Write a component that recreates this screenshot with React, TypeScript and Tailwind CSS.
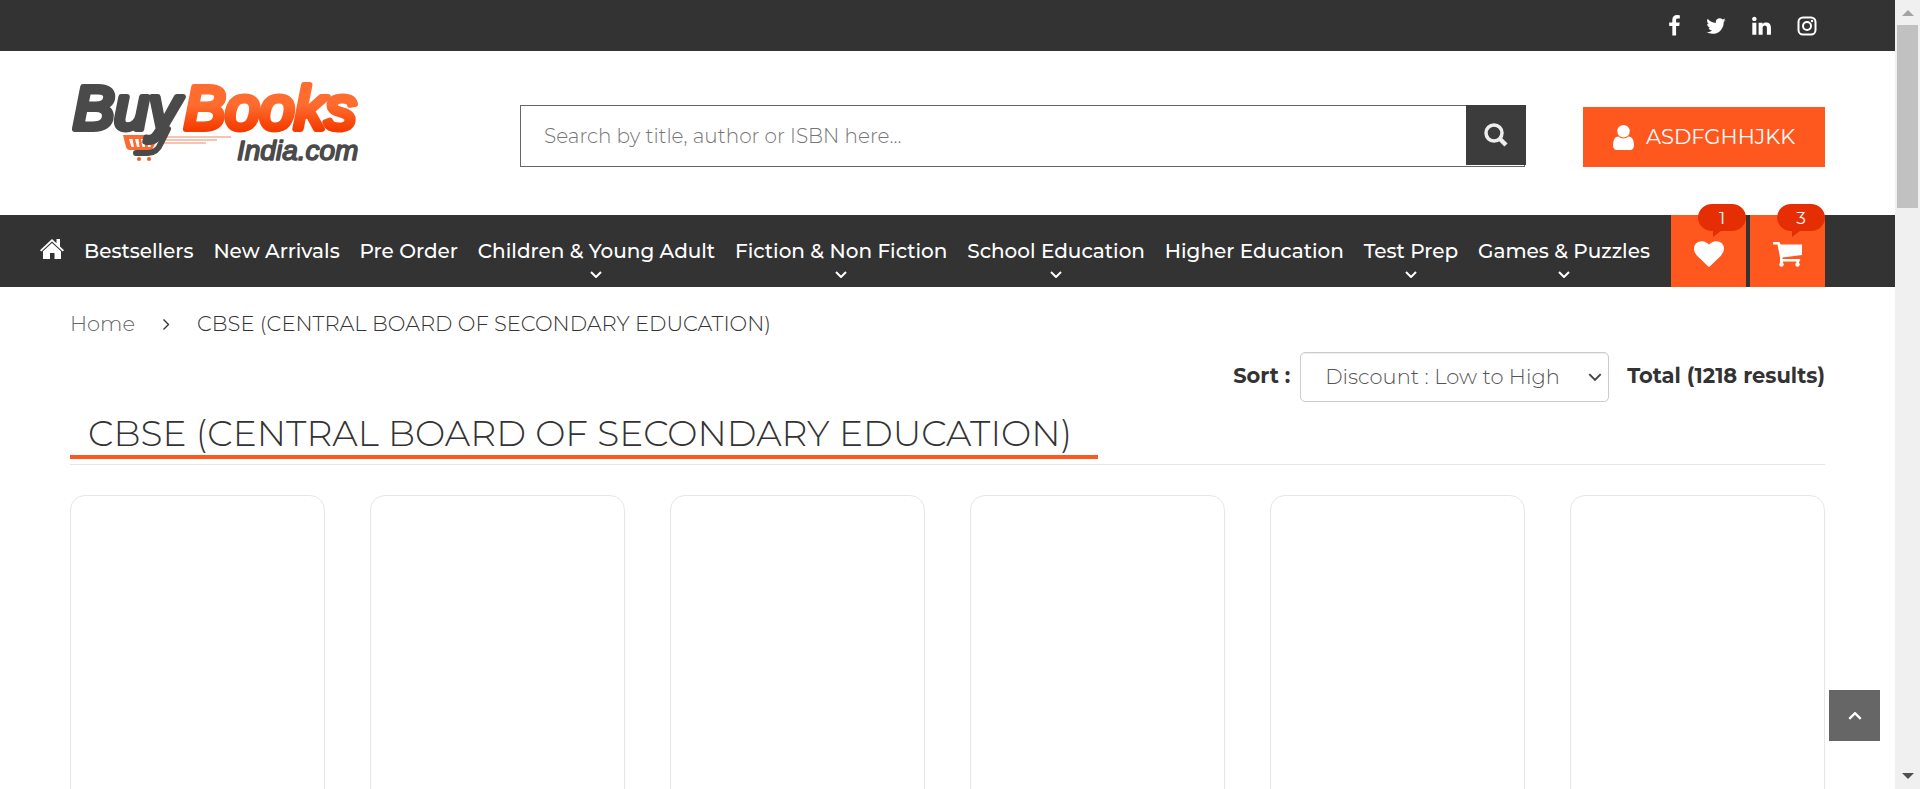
import React from 'react';

const FB = 'M1343 12v264h-157q-86 0-116 36t-30 108v189h293l-39 296h-254v759h-306v-759h-255v-296h255v-218q0-186 104-288.5t277-102.5q147 0 228 12z';
const TW = 'M1684 408q-67 98-162 167 1 14 1 42 0 130-38 259.5t-115.5 248.5-184.5 210.5-258 146-323 54.5q-271 0-496-145 35 4 78 4 225 0 401-138-105-2-188-64.5t-114-159.5q33 5 61 5 43 0 85-11-112-23-185.5-111.5t-73.5-205.5v-4q68 38 146 41-66-44-105-115t-39-154q0-88 44-163 121 149 294.5 238.5t371.5 99.5q-8-38-8-74 0-134 94.5-228.5t228.5-94.5q140 0 236 102 109-21 205-78-37 115-142 178 93-10 186-50z';
const LI = 'M477 625v991h-330v-991h330zm21-306q1 73-50.5 122t-135.5 49h-2q-82 0-132-49t-50-122q0-74 51.5-122.5t134.5-48.5 133 48.5 51 122.5zm1166 729v568h-329v-530q0-105-40.5-164.5t-126.5-59.5q-63 0-105.5 34.5t-63.5 85.5q-11 30-11 81v553h-329q2-399 2-647t-1-296l-1-48h329v144h-2q20-32 41-56t56.5-52 87-43.5 114.5-15.5q171 0 275 113.5t104 332.5z';
const USER = 'M1536 1399q0 109-62.5 187t-150.5 78h-854q-88 0-150.5-78t-62.5-187q0-85 8.5-160.5t31.5-152 58.5-131 94-89 134.5-34.5q131 128 313 128t313-128q76 0 134.5 34.5t94 89 58.5 131 31.5 152 8.5 160.5zm-256-887q0 159-112.5 271.5t-271.5 112.5-271.5-112.5-112.5-271.5 112.5-271.5 271.5-112.5 271.5 112.5 112.5 271.5z';

function Glyph({ d, box, className }: { d: string; box: string; className: string }) {
  return (
    <svg viewBox={box} className={className} fill="currentColor" aria-hidden="true">
      <path d={d} />
    </svg>
  );
}

function Chevron({ className, width = 2 }: { className: string; width?: number }) {
  return (
    <svg viewBox="0 0 12 7" className={className} fill="none" stroke="currentColor" strokeWidth={width} aria-hidden="true">
      <path d="M1 1l5 5 5-5" />
    </svg>
  );
}

function Logo() {
  return (
    <svg viewBox="0 0 300 110" className="h-[110px] w-[300px]" role="img" aria-label="BuyBooks India.com">
      <defs>
        <linearGradient id="books" gradientUnits="userSpaceOnUse" x1="0" y1="22" x2="0" y2="71">
          <stop offset="0.45" stopColor="#ff6c2f" />
          <stop offset="0.95" stopColor="#f53c00" />
        </linearGradient>
      </defs>
      <path d="M92 75h69v2H92zM92 78h55v2H92zM92 81h44v2H92z" fill="#f6c4b0" />
      <path d="M53 74h36l-7 15H59q-2 0-3-3z" fill="#ff6a33" />
      <path d="M59 78h3.500l1.500 8h-2.500zM65 78h3.500l1 8H67zM71 78h3.500l.5 8h-2.500zM77 78h3.500l0 8H78z" fill="#fff" />
      <g fontFamily="Liberation Sans, sans-serif" fontStyle="italic" strokeLinejoin="round" strokeLinecap="round">
        <text x="3" y="68" fontSize="62" fill="#4a4a4a" stroke="#4a4a4a" strokeWidth="6">Buy</text>
        <text x="114" y="68" fontSize="62" fill="url(#books)" stroke="url(#books)" strokeWidth="6">Books</text>
        <text x="167" y="99" fontSize="28" fill="#4a4a4a" stroke="#4a4a4a" strokeWidth="1.600">India.com</text>
      </g>
      <path d="M98 68 91 82q-4 10-13 10H66" fill="none" stroke="#4a4a4a" strokeWidth="6" strokeLinecap="round" />
      <circle cx="69" cy="98" r="2" fill="#ff5a1f" />
      <circle cx="79" cy="98" r="2" fill="#ff5a1f" />
    </svg>
  );
}

const links = [
  { label: 'Bestsellers', menu: false },
  { label: 'New Arrivals', menu: false },
  { label: 'Pre Order', menu: false },
  { label: 'Children & Young Adult', menu: true },
  { label: 'Fiction & Non Fiction', menu: true },
  { label: 'School Education', menu: true },
  { label: 'Higher Education', menu: false },
  { label: 'Test Prep', menu: true },
  { label: 'Games & Puzzles', menu: true },
];

function Badge({ count }: { count: number }) {
  return (
    <span className="absolute -top-[11px] right-0 h-[33px] w-12 text-white">
      <svg viewBox="0 0 48 33" className="absolute inset-0 h-full w-full" fill="#e62e05" aria-hidden="true">
        <path d="M14 0h20a14 13.500 0 0 1 0 27H23l-8 6v-6h-1a14 13.500 0 0 1 0-27z" />
      </svg>
      <span className="relative block pt-[2px] text-center text-[17px] font-normal leading-6">{count}</span>
    </span>
  );
}

export default function App() {
  return (
    <div className="flex h-screen overflow-hidden bg-white font-['Montserrat','Inter',sans-serif] text-[21px] font-light text-[#333]">
      <div className="relative flex min-w-0 flex-1 flex-col overflow-hidden">
        <div className="flex h-[51px] shrink-0 items-center justify-end gap-[26px] bg-[#333] pr-[78px] text-white">
          <a href="#facebook" aria-label="Facebook"><Glyph d={FB} box="479 0 864 1792" className="h-[22px] w-[11px]" /></a>
          <a href="#twitter" aria-label="Twitter"><Glyph d={TW} box="108 0 1576 1792" className="h-[22px] w-[20px]" /></a>
          <a href="#linkedin" aria-label="LinkedIn"><Glyph d={LI} box="127 0 1537 1792" className="h-[22px] w-[19px]" /></a>
          <a href="#instagram" aria-label="Instagram">
            <svg viewBox="0 0 20 20" className="h-5 w-5" fill="none" stroke="currentColor" strokeWidth="2" aria-hidden="true">
              <rect x="1.500" y="1.500" width="17" height="17" rx="4.500" />
              <circle cx="10" cy="10" r="4" />
              <circle cx="15" cy="5" r="1.200" fill="currentColor" stroke="none" />
            </svg>
          </a>
        </div>

        <header className="flex h-[164px] shrink-0 items-start px-[70px] pt-[54px]">
          <a href="#home" className="-mt-[44px] shrink-0"><Logo /></a>
          <form className="ml-[150px] flex h-[62px] min-w-0 flex-1 items-start border border-[#666]">
            <input
              type="text"
              aria-label="Search"
              placeholder="Search by title, author or ISBN here..."
              className="h-[60px] min-w-0 flex-1 px-[23px] text-xl font-light outline-none placeholder:text-[#757575]"
            />
            <button type="button" aria-label="Search" className="-mr-[2px] -mt-px flex h-[60px] w-[60px] items-center justify-center bg-[#3c3c3c] text-[#eee]">
              <svg viewBox="0 0 24 24" className="h-6 w-6" fill="none" stroke="currentColor" strokeWidth="3.500" aria-hidden="true">
                <circle cx="10" cy="10" r="8" />
                <path d="m15.500 15.500 6.500 6.500" strokeWidth="4.500" />
              </svg>
            </button>
          </form>
          <button type="button" className="ml-[58px] mt-[2px] flex h-[60px] w-[242px] shrink-0 items-center justify-center gap-3 bg-[#ff581f] font-normal text-white">
            <Glyph d={USER} box="256 128 1280 1536" className="h-[25px] w-[21px]" />
            ASDFGHHJKK
          </button>
        </header>

        <nav className="flex h-[72px] shrink-0 items-start bg-[#333] pl-10 pr-[70px] text-white">
          <a href="#home" aria-label="Home" className="mt-[24px] shrink-0">
            <svg viewBox="0 0 24 20" className="h-5 w-6" fill="currentColor" aria-hidden="true">
              <path d="M12 0l4.500 4.200V0H20v7.500L24 11.200 22.700 12.600 12 2.600 1.300 12.600 0 11.200z" />
              <path d="M12 4l9 8.300V20h-6.500v-6h-4.500v6H3v-7.700z" />
            </svg>
          </a>
          <ul className="ml-5 flex min-w-0 flex-1 justify-between pr-[21px] font-medium">
            {links.map((l) => (
              <li key={l.label}>
                <a href="#menu" className="flex flex-col items-center whitespace-nowrap pt-[22px] text-xl leading-7">
                  {l.label}
                  {l.menu && <Chevron className="mt-[6px] h-[7px] w-3" />}
                </a>
              </li>
            ))}
          </ul>
          <div className="flex shrink-0 gap-1">
            <a href="#wishlist" aria-label="Wishlist" className="relative flex h-[72px] w-[75px] items-center justify-center bg-[#ff581f] pt-[6px]">
              <svg viewBox="0 0 1792 1536" className="h-[26px] w-[30px]" fill="currentColor" aria-hidden="true">
                <path d="M896 1536q-26 0-44-18l-624-602q-10-8-27.500-26t-55.500-65.500-68-97.500-53.500-121-23.500-138q0-220 127-344t351-124q62 0 126.500 21.500t120 58 95.500 68.500 76 68q36-36 76-68t95.500-68.500 120-58 126.500-21.500q224 0 351 124t127 344q0 221-229 450l-623 600q-18 18-44 18z" />
              </svg>
              <Badge count={1} />
            </a>
            <a href="#cart" aria-label="Cart" className="relative flex h-[72px] w-[75px] items-center justify-center bg-[#ff581f] pt-[6px]">
              <svg viewBox="0 0 29 25" className="h-[25px] w-[29px]" fill="currentColor" aria-hidden="true">
                <path d="M1 0h5.500l1 2.500H29V13L9.500 15.500v1.500H26a1 1 0 0 1 0 2.500H7v-4L4.500 2.500H1a1 1 0 0 1 0-2.500z" />
                <path d="M7 18h3v5H7zM23.500 18h2.500v5h-2.500z" />
                <circle cx="8.500" cy="22.500" r="2.200" />
                <circle cx="24.500" cy="22.500" r="2.200" />
              </svg>
              <Badge count={3} />
            </a>
          </div>
        </nav>

        <main className="px-[70px] pt-[23px]">
          <div className="flex h-7 items-center">
            <a href="#home" className="text-[#666]">Home</a>
            <Chevron className="mx-[25px] h-[7px] w-3 -rotate-90" width={1.4} />
            <span>CBSE (CENTRAL BOARD OF SECONDARY EDUCATION)</span>
          </div>
          <div className="mt-[14px] flex items-start justify-end font-bold">
            <label htmlFor="sort" className="pt-2">Sort :</label>
            <div className="relative ml-[10px]">
              <select
                id="sort"
                defaultValue="low"
                className="h-[50px] w-[309px] appearance-none rounded-[5px] border border-[#ccc] bg-white pl-6 font-light text-[#555] shadow-[inset_0_1px_1px_rgba(0,0,0,0.075)]"
              >
                <option value="low">Discount : Low to High</option>
                <option value="high">Discount : High to Low</option>
              </select>
              <Chevron className="pointer-events-none absolute right-[7px] top-[21px] h-2 w-[14px] text-[#444]" width={1.7} />
            </div>
            <span className="ml-[18px] pt-2">Total (1218 results)</span>
          </div>
          <div className="mt-[10px] flex border-b border-[#e6e6e6] pb-[5px]">
            <h1 className="border-b-4 border-[#ff581f] pl-[18px] pr-[26px] text-[36px] leading-[43px]">
              CBSE (CENTRAL BOARD OF SECONDARY EDUCATION)
            </h1>
          </div>
          <div className="mt-[30px] grid grid-cols-6 gap-[45px]">
            {[0, 1, 2, 3, 4, 5].map((n) => (
              <article key={n} className="h-[500px] rounded-[15px] border border-[#e6e6e6]" />
            ))}
          </div>
        </main>

        <button type="button" aria-label="Back to top" className="absolute bottom-12 right-[15px] flex h-[51px] w-[51px] items-center justify-center bg-[#666] text-white">
          <Chevron className="h-2 w-[14px] rotate-180" />
        </button>
      </div>

      <div aria-hidden="true" className="flex w-[25px] shrink-0 flex-col items-center justify-between bg-[#f0f0f0]">
        <div className="flex w-full flex-col items-center">
          <svg viewBox="0 0 12 6" className="mb-[9px] mt-[10px] h-[6px] w-3" fill="#a3a3a3"><path d="M0 6 6 0l6 6z" /></svg>
          <div className="h-[183px] w-[21px] bg-[#c1c1c1]" />
        </div>
        <svg viewBox="0 0 12 6" className="mb-[10px] h-[6px] w-3" fill="#505050"><path d="M0 0l6 6 6-6z" /></svg>
      </div>
    </div>
  );
}
